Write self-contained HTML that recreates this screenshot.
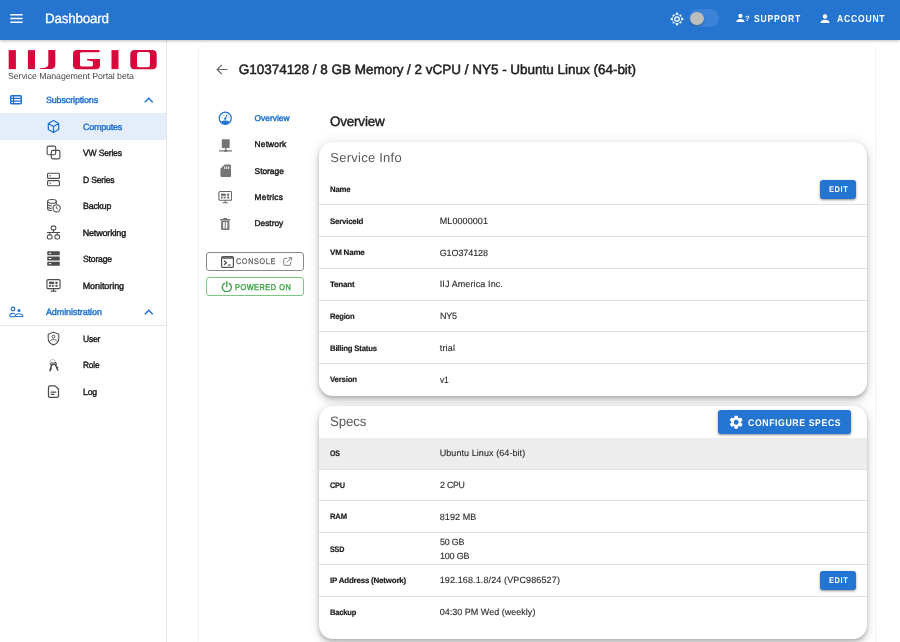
<!DOCTYPE html>
<html>
<head>
<meta charset="utf-8">
<title>Dashboard</title>
<style>
*{box-sizing:border-box;margin:0;padding:0}
html,body{width:900px;height:642px;overflow:hidden;background:#fff;font-family:"Liberation Sans",sans-serif;color:#222}
.abs{position:absolute}
#tx{position:absolute;left:0;top:0;width:900px;height:642px;will-change:transform;text-rendering:geometricPrecision}
.t{position:absolute;white-space:nowrap;line-height:1}
#hdr{position:absolute;left:0;top:0;width:900px;height:39.5px;background:#2575d0;box-shadow:0 1px 3px rgba(0,0,0,.26)}
#side{position:absolute;left:0;top:39.5px;width:167px;height:602.5px;background:#fff;border-right:1px solid #e6e6e6}
#main{position:absolute;left:199px;top:47px;width:676.2px;height:595px;background:#fff;border-radius:3px 3px 0 0;box-shadow:0 1px 2.500px rgba(0,0,0,.12),0 0 1px rgba(0,0,0,.12);overflow:hidden}
#mi{position:absolute;left:-199px;top:-47px;width:900px;height:642px}
.card{position:absolute;background:#fff;border-radius:14px;box-shadow:0 2.1px 3.5px -.7px rgba(0,0,0,.17),0 4.2px 7px 0 rgba(0,0,0,.12),0 .7px 12.6px 0 rgba(0,0,0,.1)}
.sep{position:absolute;left:319.200px;width:548.100px;height:1px;background:#e2e2e2}
.btn{position:absolute;background:#2474d2;border-radius:3px;box-shadow:0 1px 2.500px rgba(0,0,0,.45)}
</style>
</head>
<body>
<div id="side"></div>
<div id="main"><div id="mi"><div class="card" style="left:319.200px;top:142px;width:548.100px;height:253.900px"></div>
<div class="card" style="left:319.200px;top:406.200px;width:548.100px;height:232.400px;overflow:hidden"><div style="position:absolute;left:0;top:31.900px;width:100%;height:31.500px;background:#ededed"></div></div></div></div>
<div id="hdr"></div>
<svg class="abs" style="left:10px;top:13px" width="13" height="11" viewBox="0 0 13 11"><path d="M0.300 1.700h12.300M0.300 5.500h12.300M0.300 9.300h12.300" stroke="#fff" stroke-width="1.400" fill="none"/></svg>
<svg class="abs" style="left:670.100px;top:11.600px" width="14" height="14" viewBox="-12 -12 24 24"><circle cx="0" cy="0" r="3.800" fill="none" stroke="#fff" stroke-width="2.200"/><g fill="#fff"><path d="M0 -11.800L3.400 -7.300H-3.400Z"/><path d="M0 11.800L3.400 7.300H-3.400Z"/><path d="M-11.800 0L-7.300 3.400V-3.400Z"/><path d="M11.800 0L7.300 3.400V-3.400Z"/><g transform="rotate(45)"><path d="M0 -10.800L2.800 -7.200H-2.800Z"/><path d="M0 10.800L2.800 7.200H-2.800Z"/><path d="M-10.800 0L-7.200 2.800V-2.800Z"/><path d="M10.800 0L7.200 2.800V-2.800Z"/></g></g></svg>
<div class="abs" style="left:688.800px;top:9.400px;width:30.600px;height:17.600px;border-radius:9px;background:#3b83d8"></div>
<div class="abs" style="left:690.400px;top:11.500px;width:13.600px;height:13.600px;border-radius:7px;background:#bdbdbd;box-shadow:0 1px 2px rgba(0,0,0,.3)"></div>
<svg class="abs" style="left:735.600px;top:12.400px" width="12" height="11" viewBox="0 0 26 24"><circle cx="9.500" cy="8.500" r="4.500" fill="#fff"/><path d="M.5 22c0-4.600 4.500-6.800 9-6.800s9 2.200 9 6.800z" fill="#fff"/></svg>
<svg class="abs" style="left:819px;top:12px" width="12" height="13" viewBox="0 0 24 24"><circle cx="12" cy="8" r="4.400" fill="#fff"/><path d="M3 21c0-4.500 4.500-6.500 9-6.500s9 2 9 6.500z" fill="#fff"/></svg>
<svg class="abs" style="left:0;top:44px" width="167" height="30" viewBox="0 44 167 30">
 <g fill="#d7063b">
  <rect x="8.700" y="50.100" width="7.200" height="19"/>
  <rect x="27.900" y="50.100" width="7.100" height="19"/>
  <path d="M48.300 50.100H55.300V65C55.300 67.800 53.600 69.100 50.500 69.100H39.700V68.200C43 68.100 48.300 68 48.300 64.500Z"/>
  <path d="M77 50H99.500V52.300H81.800C80.500 52.300 80 52.900 80 54V64.800C80 65.900 80.500 66.400 81.800 66.400H91.200C92.500 66.400 93 65.900 93 64.800V61.600L87 60.200V59H100V65.300C100 68 98.700 69.300 96 69.300H77C74.300 69.300 73 68 73 65.300V54C73 51.300 74.300 50 77 50Z"/>
  <rect x="111.500" y="50.100" width="7" height="19"/>
  <path fill-rule="evenodd" d="M134.800 50H152.200C155.200 50 156.700 51.500 156.700 54.500V64.800C156.700 67.800 155.200 69.300 152.200 69.300H134.800C131.800 69.300 130.300 67.800 130.300 64.800V54.500C130.300 51.500 131.800 50 134.800 50ZM139.500 52C137.800 52 137 52.800 137 54.500V64.800C137 66.500 137.800 67.300 139.500 67.300H147.500C149.200 67.300 150 66.500 150 64.800V54.500C150 52.800 149.200 52 147.500 52Z"/>
 </g>
</svg>
<svg class="abs" style="left:10px;top:95px" width="12" height="9.500" viewBox="0 0 12 9.500"><rect x=".7" y=".7" width="10.600" height="8.100" rx="1" fill="none" stroke="#1f72d2" stroke-width="1.500"/><path d="M.7 3.400h10.600M.7 6.100h10.600M3.600 .7v8.100" stroke="#1f72d2" stroke-width="1.300" fill="none"/></svg>
<svg class="abs" style="left:144px;top:96.500px" width="9.500" height="6" viewBox="0 0 9.500 6"><path d="M.8 5.300l3.950-4 3.950 4" stroke="#1f72d2" stroke-width="1.500" fill="none"/></svg>
<div class="abs" style="left:0;top:113.200px;width:166px;height:26.500px;background:#e4eefa"></div>
<svg class="abs" style="left:45.800px;top:118.9px" width="15" height="15" viewBox="0 0 24 24"><path d="M12 2.500l8.300 4.700v9.600L12 21.500l-8.300-4.700V7.200zM3.700 7.200L12 12l8.300-4.800M12 12v9.500" fill="none" stroke="#1f72d2" stroke-width="2" stroke-linejoin="round"/></svg>
<svg class="abs" style="left:45.800px;top:145.2px" width="15" height="15" viewBox="0 0 24 24"><rect x="1.800" y="1.800" width="13.700" height="13.700" rx="2.500" fill="none" stroke="#4c4c4c" stroke-width="1.800"/><rect x="8.500" y="8.500" width="13.700" height="13.700" rx="2.500" fill="none" stroke="#4c4c4c" stroke-width="1.800"/></svg>
<svg class="abs" style="left:45.800px;top:171.9px" width="15" height="15" viewBox="0 0 24 24"><rect x="2.500" y="2" width="19" height="8.200" rx="1.600" fill="none" stroke="#4c4c4c" stroke-width="1.800"/><rect x="2.500" y="13.800" width="19" height="8.200" rx="1.600" fill="none" stroke="#4c4c4c" stroke-width="1.800"/><path d="M5.500 6.100h2.500M5.500 17.900h2.500" stroke="#4c4c4c" stroke-width="1.600"/></svg>
<svg class="abs" style="left:45.800px;top:198.4px" width="15" height="15" viewBox="0 0 24 24"><ellipse cx="9.500" cy="5.500" rx="7" ry="3" fill="none" stroke="#4c4c4c" stroke-width="1.700"/><path d="M2.500 5.500v11.500c0 1.700 3 3 7 3M16.500 5.500v4M2.500 9.500c0 1.700 3 3 7 3M2.500 13.500c0 1.700 3 3 7 3" fill="none" stroke="#4c4c4c" stroke-width="1.700"/><circle cx="17" cy="16.500" r="5.800" fill="#fff" stroke="#4c4c4c" stroke-width="1.700"/><path d="M17 13.300v3.400l2.200 1.500" fill="none" stroke="#4c4c4c" stroke-width="1.500"/></svg>
<svg class="abs" style="left:45.800px;top:224.8px" width="15" height="15" viewBox="0 0 24 24"><rect x="8.300" y="1.800" width="7.400" height="6" rx="2" fill="none" stroke="#4c4c4c" stroke-width="1.700"/><rect x="2.300" y="15.800" width="7.400" height="6.700" rx="2.500" fill="none" stroke="#4c4c4c" stroke-width="1.700"/><rect x="14.300" y="15.800" width="7.400" height="6.700" rx="2.500" fill="none" stroke="#4c4c4c" stroke-width="1.700"/><path d="M12 7.800v4.200M1.500 12h21M6 12v3.800M18 12v3.800" fill="none" stroke="#4c4c4c" stroke-width="1.700"/></svg>
<svg class="abs" style="left:45.800px;top:251.3px" width="15" height="15" viewBox="0 0 24 24"><g fill="#4c4c4c"><rect x="2" y=".5" width="20" height="6.400" rx=".8"/><rect x="2" y="8.800" width="20" height="6.400" rx=".8"/><rect x="2" y="17.100" width="20" height="6.400" rx=".8"/></g><path d="M4.500 3.700h4M4.500 12h4M4.500 20.300h4" stroke="#fff" stroke-width="1.600"/></svg>
<svg class="abs" style="left:45.800px;top:277.7px" width="15" height="15" viewBox="0 0 24 24"><rect x="1.500" y="2.500" width="21" height="14.500" rx="2" fill="none" stroke="#4c4c4c" stroke-width="1.800"/><path d="M12 17v3M7.500 21h9" stroke="#4c4c4c" stroke-width="1.800"/><g fill="#4c4c4c"><rect x="5" y="6" width="8" height="3.500"/><rect x="15" y="6" width="3.500" height="3.500"/><rect x="5" y="11" width="3" height="3"/><rect x="9.500" y="11" width="3" height="3"/><rect x="15" y="11" width="3.500" height="3"/></g></svg>
<svg class="abs" style="left:45.800px;top:331.3px" width="15" height="15" viewBox="0 0 24 24"><path d="M12 1.800l8.500 3.400v6.300c0 5-3.600 9-8.500 10.700-4.900-1.700-8.500-5.700-8.500-10.700V5.200z" fill="none" stroke="#4c4c4c" stroke-width="1.700" stroke-linejoin="round"/><circle cx="12" cy="9" r="2.300" fill="none" stroke="#4c4c4c" stroke-width="1.500"/><path d="M6 16.500c1.600-2 3.600-2.700 6-2.700s4.400.7 6 2.700" fill="none" stroke="#4c4c4c" stroke-width="1.500"/></svg>
<svg class="abs" style="left:45.800px;top:357.5px" width="15" height="15" viewBox="0 0 24 24"><circle cx="10.500" cy="7" r="4.600" fill="none" stroke="#a8a8a8" stroke-width="1.300"/><g stroke="#4c4c4c" stroke-linecap="round" fill="none"><path d="M9.300 9.800L6.500 20.500" stroke-width="2.500"/><path d="M14.800 9.500L18.800 19" stroke-width="2.500"/><path d="M6.800 17l2.300.6M17.200 15.600l2.200-.8" stroke-width="1.500"/></g><circle cx="9.500" cy="9.300" r="2.700" fill="#4c4c4c"/><circle cx="14.600" cy="9" r="2.700" fill="#4c4c4c"/><circle cx="9.500" cy="9" r=".9" fill="#fff"/><circle cx="14.600" cy="8.700" r=".9" fill="#fff"/></svg>
<svg class="abs" style="left:45.800px;top:384.1px" width="15" height="15" viewBox="0 0 24 24"><path d="M6 3h8.500l5.500 5.500V19c0 1.500-.8 2.300-2.300 2.300H6.300C4.800 21.300 4 20.500 4 19V5.300C4 3.800 4.800 3 6.300 3z" fill="none" stroke="#4c4c4c" stroke-width="2" stroke-linejoin="round"/><path d="M7.500 12.800h9M7.500 16.600h6" stroke="#4c4c4c" stroke-width="2"/></svg>
<svg class="abs" style="left:9px;top:306px" width="15" height="12" viewBox="0 0 30 24"><circle cx="8" cy="6" r="3.800" fill="none" stroke="#1f72d2" stroke-width="2.200"/><circle cx="20" cy="9" r="3" fill="#1f72d2"/><path d="M1.500 21c0-4 3-6.500 6.500-6.500 1.500 0 2.800.3 4 1" fill="none" stroke="#1f72d2" stroke-width="2.200"/><path d="M1.500 21.500h10" stroke="#1f72d2" stroke-width="2.200"/><path d="M12.500 21c0-3.500 3.500-5.500 7.500-5.500s7.500 2 7.500 5.500z" fill="none" stroke="#1f72d2" stroke-width="2.200" stroke-linejoin="round"/></svg>
<svg class="abs" style="left:144px;top:308.500px" width="9.500" height="6" viewBox="0 0 9.500 6"><path d="M.8 5.300l3.950-4 3.950 4" stroke="#1f72d2" stroke-width="1.500" fill="none"/></svg>
<div class="abs" style="left:0;top:324.500px;width:166px;height:1px;background:#e4e4e4"></div>
<svg class="abs" style="left:215.500px;top:64px" width="12" height="11" viewBox="0 0 12 11"><path d="M11.300 5.500H1.200M5.800 .8L1.100 5.500l4.700 4.700" fill="none" stroke="#666" stroke-width="1.200"/></svg>
<svg class="abs" style="left:218px;top:110.650px" width="14.500" height="14.500" viewBox="0 0 24 24"><circle cx="12" cy="12" r="10" fill="none" stroke="#1f72d2" stroke-width="2"/><path d="M5.300 17.800C7.800 16.200 10 15.900 12 15.900S16.200 16.200 18.700 17.800C17 20.600 14.500 21.900 12 21.900S7 20.600 5.300 17.800Z" fill="#1f72d2"/><path d="M12 12.800L14.700 6.400" stroke="#1f72d2" stroke-width="1.700" stroke-linecap="round"/><circle cx="12" cy="12.900" r="1.900" fill="#1f72d2"/><g fill="#1f72d2" opacity=".55"><circle cx="6.600" cy="11" r="1.100"/><circle cx="9.500" cy="7.300" r="1.100"/><circle cx="17.500" cy="11" r="1.100"/></g></svg>
<svg class="abs" style="left:218.500px;top:138.700px" width="13.500" height="13.500" viewBox="0 0 24 24"><rect x="5" y="0.500" width="14" height="15.500" rx="1.500" fill="#757575"/><path d="M12 16v4M0 21h24" stroke="#757575" stroke-width="2"/><rect x="9.500" y="19" width="5" height="4" fill="#757575"/></svg>
<svg class="abs" style="left:219.500px;top:164.300px" width="11.500" height="13.500" viewBox="0 0 20 24"><path d="M8 1h9.500c1.200 0 2 .8 2 2v18c0 1.200-.8 2-2 2h-15c-1.200 0-2-.8-2-2V8.500z" fill="#757575"/><path d="M8.300 4.500v4.500M11.800 4.500v4.500M15.300 4.500v4.500" stroke="#fff" stroke-width="1.800"/></svg>
<svg class="abs" style="left:217.800px;top:190.200px" width="14.500" height="14.500" viewBox="0 0 24 24"><rect x="1.500" y="2.500" width="21" height="14.500" rx="2" fill="none" stroke="#666" stroke-width="1.800"/><path d="M12 17v3M7.500 21h9" stroke="#666" stroke-width="1.800"/><g fill="#666"><rect x="5" y="6" width="8" height="3.500"/><rect x="15" y="6" width="3.500" height="3.500"/><rect x="5" y="11" width="3" height="3"/><rect x="9.500" y="11" width="3" height="3"/><rect x="15" y="11" width="3.500" height="3"/></g></svg>
<svg class="abs" style="left:220px;top:217.500px" width="10.500" height="12.500" viewBox="0 0 20 24"><path d="M0 3h20M6.500 1h7" stroke="#757575" stroke-width="2.500"/><path d="M2 5h16v16.500c0 1-.8 1.700-1.700 1.700H3.700c-.9 0-1.700-.7-1.700-1.700z" fill="#757575"/><path d="M6 7.500h3v12.500H6zM11 7.500h3v12.500h-3z" fill="#fff"/></svg>
<div class="abs" style="left:206.400px;top:252.300px;width:97.400px;height:18.600px;border:1px solid #8a8a8a;border-radius:3px"></div>
<svg class="abs" style="left:220.500px;top:255.500px" width="13" height="12" viewBox="0 0 26 24"><rect x="1.200" y="1.200" width="23.600" height="21.600" rx="2.500" fill="none" stroke="#555" stroke-width="2.400"/><path d="M1.200 4h23.600" stroke="#555" stroke-width="3"/><path d="M6 9.500l5 4-5 4M13.500 18h6" fill="none" stroke="#444" stroke-width="2.300"/></svg>
<svg class="abs" style="left:283px;top:257px" width="9.500" height="9" viewBox="0 0 20 19"><path d="M9 3H3.500C2.400 3 1.500 3.900 1.500 5v10.500c0 1.100.9 2 2 2H14c1.100 0 2-.9 2-2V10" fill="none" stroke="#777" stroke-width="2"/><path d="M8 11.500L18 1.500M12 1.500h6v6" fill="none" stroke="#777" stroke-width="2"/></svg>
<div class="abs" style="left:206.400px;top:277.300px;width:97.400px;height:18.600px;border:1px solid #7cc883;border-radius:3px"></div>
<svg class="abs" style="left:220.600px;top:280.700px" width="11.600" height="11.600" viewBox="0 0 22 22"><path d="M6.500 4.500a8.600 8.600 0 1 0 9 0" fill="none" stroke="#3fa647" stroke-width="2.600" stroke-linecap="round"/><path d="M11 1.200v9.500" stroke="#3fa647" stroke-width="2.600" stroke-linecap="round"/></svg>
<div class="sep" style="top:204.2px"></div>
<div class="sep" style="top:235.9px"></div>
<div class="sep" style="top:267.7px"></div>
<div class="sep" style="top:299.5px"></div>
<div class="sep" style="top:331.3px"></div>
<div class="sep" style="top:362.8px"></div>
<div class="btn" style="left:820.200px;top:180.200px;width:36.200px;height:18.500px"></div>
<div class="sep" style="top:468.8px"></div>
<div class="sep" style="top:500.4px"></div>
<div class="sep" style="top:532.1px"></div>
<div class="sep" style="top:563.8px"></div>
<div class="sep" style="top:595.6px"></div>
<div class="btn" style="left:718px;top:410.300px;width:132.800px;height:24px"></div>
<svg class="abs" style="left:728px;top:413.800px" width="16.400" height="16.400" viewBox="0 0 24 24"><path fill="#fff" d="M19.140 12.940c.04-.3.060-.61.060-.94 0-.32-.02-.64-.07-.94l2.030-1.580a.49.49 0 0 0 .12-.61l-1.920-3.320a.488.488 0 0 0-.59-.22l-2.390.96c-.5-.38-1.030-.7-1.620-.94l-.36-2.540a.484.484 0 0 0-.48-.41h-3.840c-.24 0-.43.170-.47.410l-.36 2.540c-.59.240-1.130.57-1.620.94l-2.390-.96c-.22-.08-.47 0-.59.220L2.740 8.870c-.12.210-.08.470.12.610l2.030 1.580c-.05.300-.09.630-.09.940s.02.640.07.940l-2.030 1.580a.49.49 0 0 0-.12.610l1.920 3.320c.12.220.37.290.59.220l2.390-.96c.5.380 1.030.7 1.620.94l.36 2.540c.05.240.24.410.48.410h3.840c.24 0 .44-.17.470-.41l.36-2.540c.59-.24 1.130-.56 1.620-.94l2.390.96c.22.080.47 0 .59-.22l1.920-3.320c.12-.22.070-.47-.12-.61l-2.010-1.580zM12 15.600c-1.980 0-3.600-1.620-3.600-3.600s1.620-3.600 3.600-3.600 3.600 1.620 3.600 3.600-1.620 3.600-3.600 3.600z"/></svg>
<div class="btn" style="left:820.200px;top:571.200px;width:36.200px;height:18.500px"></div>
<div id="tx">
<div class="t" style="left:45.0px;top:12.00px;transform:scaleX(0.9931);transform-origin:0 0;font-size:13.5px;color:#fff;-webkit-text-stroke:0.3px;letter-spacing:-0.200px;">Dashboard</div>
<div class="t" style="left:745.0px;top:15.00px;font-size:7.6px;color:#fff;font-weight:bold;">?</div>
<div class="t" style="left:754.0px;top:15.00px;transform:scaleX(0.8400);transform-origin:0 0;font-size:10.2px;color:#fff;font-weight:bold;letter-spacing:0.958px;">SUPPORT</div>
<div class="t" style="left:837.2px;top:15.00px;transform:scaleX(0.8400);transform-origin:0 0;font-size:10.2px;color:#fff;font-weight:bold;letter-spacing:0.955px;">ACCOUNT</div>
<div class="t" style="left:8.0px;top:72.00px;font-size:8.8px;color:#4a4a4a;letter-spacing:-0.073px;">Service Management Portal beta</div>
<div class="t" style="left:45.9px;top:96.00px;font-size:9.0px;color:#1f72d2;-webkit-text-stroke:0.42px;letter-spacing:-0.144px;">Subscriptions</div>
<div class="t" style="left:82.7px;top:123.00px;transform:scaleX(0.9916);transform-origin:0 0;font-size:9.0px;color:#1f72d2;-webkit-text-stroke:0.42px;letter-spacing:-0.200px;">Computes</div>
<div class="t" style="left:82.7px;top:149.00px;transform:scaleX(0.9532);transform-origin:0 0;font-size:9.0px;color:#222;-webkit-text-stroke:0.42px;letter-spacing:-0.200px;">VW Series</div>
<div class="t" style="left:82.7px;top:176.00px;transform:scaleX(0.9542);transform-origin:0 0;font-size:9.0px;color:#222;-webkit-text-stroke:0.42px;letter-spacing:-0.200px;">D Series</div>
<div class="t" style="left:82.7px;top:202.00px;transform:scaleX(0.9783);transform-origin:0 0;font-size:9.0px;color:#222;-webkit-text-stroke:0.42px;letter-spacing:-0.200px;">Backup</div>
<div class="t" style="left:82.7px;top:229.00px;font-size:9.0px;color:#222;-webkit-text-stroke:0.42px;letter-spacing:-0.170px;">Networking</div>
<div class="t" style="left:82.7px;top:255.00px;transform:scaleX(0.9594);transform-origin:0 0;font-size:9.0px;color:#222;-webkit-text-stroke:0.42px;letter-spacing:-0.200px;">Storage</div>
<div class="t" style="left:82.7px;top:282.00px;font-size:9.0px;color:#222;-webkit-text-stroke:0.42px;letter-spacing:-0.070px;">Monitoring</div>
<div class="t" style="left:82.7px;top:335.00px;transform:scaleX(0.9448);transform-origin:0 0;font-size:9.0px;color:#222;-webkit-text-stroke:0.42px;letter-spacing:-0.200px;">User</div>
<div class="t" style="left:82.7px;top:361.00px;transform:scaleX(0.9210);transform-origin:0 0;font-size:9.0px;color:#222;-webkit-text-stroke:0.42px;letter-spacing:-0.200px;">Role</div>
<div class="t" style="left:82.7px;top:388.00px;transform:scaleX(0.9705);transform-origin:0 0;font-size:9.0px;color:#222;-webkit-text-stroke:0.42px;letter-spacing:-0.200px;">Log</div>
<div class="t" style="left:45.9px;top:308.00px;font-size:9.0px;color:#1f72d2;-webkit-text-stroke:0.42px;letter-spacing:-0.072px;">Administration</div>
<div class="t" style="left:238.7px;top:63.00px;font-size:13.5px;color:#222;-webkit-text-stroke:0.5px;letter-spacing:-0.017px;">G10374128 / 8 GB Memory / 2 vCPU / NY5 - Ubuntu Linux (64-bit)</div>
<div class="t" style="left:254.6px;top:114.00px;font-size:8.4px;color:#1f72d2;-webkit-text-stroke:0.42px;letter-spacing:-0.001px;">Overview</div>
<div class="t" style="left:254.6px;top:140.00px;font-size:8.4px;color:#222;-webkit-text-stroke:0.42px;letter-spacing:0.164px;">Network</div>
<div class="t" style="left:254.6px;top:167.00px;font-size:8.4px;color:#222;-webkit-text-stroke:0.42px;letter-spacing:-0.024px;">Storage</div>
<div class="t" style="left:254.6px;top:193.00px;font-size:8.4px;color:#222;-webkit-text-stroke:0.42px;letter-spacing:0.217px;">Metrics</div>
<div class="t" style="left:254.6px;top:219.00px;font-size:8.4px;color:#222;-webkit-text-stroke:0.42px;letter-spacing:-0.043px;">Destroy</div>
<div class="t" style="left:236.2px;top:258.00px;transform:scaleX(0.8800);transform-origin:0 0;font-size:8.2px;color:#666;-webkit-text-stroke:0.3px;letter-spacing:0.750px;">CONSOLE</div>
<div class="t" style="left:235.3px;top:283.00px;transform:scaleX(0.8800);transform-origin:0 0;font-size:8.3px;color:#3fa647;-webkit-text-stroke:0.4px;letter-spacing:0.630px;">POWERED ON</div>
<div class="t" style="left:330.3px;top:115.00px;transform:scaleX(0.9830);transform-origin:0 0;font-size:13.7px;color:#1a1a1a;-webkit-text-stroke:0.4px;letter-spacing:-0.200px;">Overview</div>
<div class="t" style="left:330.3px;top:151.00px;font-size:13px;color:#5a5a5a;letter-spacing:0.249px;">Service Info</div>
<div class="t" style="left:330.3px;top:186.00px;transform:scaleX(0.9671);transform-origin:0 0;font-size:8.0px;color:#1c1c1c;font-weight:bold;-webkit-text-stroke:0.2px;letter-spacing:-0.200px;">Name</div>
<div class="t" style="left:330.3px;top:218.00px;transform:scaleX(0.9800);transform-origin:0 0;font-size:8.0px;color:#1c1c1c;font-weight:bold;-webkit-text-stroke:0.2px;letter-spacing:-0.200px;">ServiceId</div>
<div class="t" style="left:439.7px;top:217.00px;font-size:9.0px;color:#303030;-webkit-text-stroke:0.15px;letter-spacing:0.094px;">ML0000001</div>
<div class="t" style="left:330.3px;top:249.00px;transform:scaleX(0.9996);transform-origin:0 0;font-size:8.0px;color:#1c1c1c;font-weight:bold;-webkit-text-stroke:0.2px;letter-spacing:-0.200px;">VM Name</div>
<div class="t" style="left:439.7px;top:249.00px;font-size:9.0px;color:#303030;-webkit-text-stroke:0.15px;letter-spacing:-0.093px;">G1O374128</div>
<div class="t" style="left:330.3px;top:281.00px;transform:scaleX(0.9984);transform-origin:0 0;font-size:8.0px;color:#1c1c1c;font-weight:bold;-webkit-text-stroke:0.2px;letter-spacing:-0.200px;">Tenant</div>
<div class="t" style="left:439.7px;top:280.00px;font-size:9.0px;color:#303030;-webkit-text-stroke:0.15px;letter-spacing:0.111px;">IIJ America Inc.</div>
<div class="t" style="left:330.3px;top:313.00px;transform:scaleX(0.9422);transform-origin:0 0;font-size:8.0px;color:#1c1c1c;font-weight:bold;-webkit-text-stroke:0.2px;letter-spacing:-0.200px;">Region</div>
<div class="t" style="left:439.7px;top:312.00px;transform:scaleX(0.9991);transform-origin:0 0;font-size:9.0px;color:#303030;-webkit-text-stroke:0.15px;letter-spacing:-0.200px;">NY5</div>
<div class="t" style="left:330.3px;top:345.00px;transform:scaleX(0.9686);transform-origin:0 0;font-size:8.0px;color:#1c1c1c;font-weight:bold;-webkit-text-stroke:0.2px;letter-spacing:-0.200px;">Billing Status</div>
<div class="t" style="left:439.7px;top:344.00px;font-size:9.0px;color:#303030;-webkit-text-stroke:0.15px;letter-spacing:0.196px;">trial</div>
<div class="t" style="left:330.3px;top:376.00px;transform:scaleX(0.9745);transform-origin:0 0;font-size:8.0px;color:#1c1c1c;font-weight:bold;-webkit-text-stroke:0.2px;letter-spacing:-0.200px;">Version</div>
<div class="t" style="left:439.7px;top:376.00px;transform:scaleX(0.9339);transform-origin:0 0;font-size:9.0px;color:#303030;-webkit-text-stroke:0.15px;letter-spacing:-0.200px;">v1</div>
<div class="t" style="left:828.8px;top:185.00px;transform:scaleX(0.9000);transform-origin:0 0;font-size:8.3px;color:#fff;font-weight:bold;letter-spacing:0.661px;">EDIT</div>
<div class="t" style="left:330.3px;top:415.00px;transform:scaleX(0.9746);transform-origin:0 0;font-size:13.7px;color:#5a5a5a;letter-spacing:-0.200px;">Specs</div>
<div class="t" style="left:330.3px;top:450.00px;transform:scaleX(0.8713);transform-origin:0 0;font-size:8.0px;color:#1c1c1c;font-weight:bold;-webkit-text-stroke:0.2px;letter-spacing:-0.200px;">OS</div>
<div class="t" style="left:439.7px;top:449.00px;font-size:9.0px;color:#303030;-webkit-text-stroke:0.15px;letter-spacing:0.073px;">Ubuntu Linux (64-bit)</div>
<div class="t" style="left:330.3px;top:482.00px;transform:scaleX(0.9157);transform-origin:0 0;font-size:8.0px;color:#1c1c1c;font-weight:bold;-webkit-text-stroke:0.2px;letter-spacing:-0.200px;">CPU</div>
<div class="t" style="left:439.7px;top:481.00px;transform:scaleX(0.9683);transform-origin:0 0;font-size:9.0px;color:#303030;-webkit-text-stroke:0.15px;letter-spacing:-0.200px;">2 CPU</div>
<div class="t" style="left:330.3px;top:513.00px;transform:scaleX(0.9541);transform-origin:0 0;font-size:8.0px;color:#1c1c1c;font-weight:bold;-webkit-text-stroke:0.2px;letter-spacing:-0.200px;">RAM</div>
<div class="t" style="left:439.7px;top:513.00px;font-size:9.0px;color:#303030;-webkit-text-stroke:0.15px;letter-spacing:0.095px;">8192 MB</div>
<div class="t" style="left:330.3px;top:546.00px;transform:scaleX(0.8970);transform-origin:0 0;font-size:8.0px;color:#1c1c1c;font-weight:bold;-webkit-text-stroke:0.2px;letter-spacing:-0.200px;">SSD</div>
<div class="t" style="left:330.3px;top:577.00px;transform:scaleX(0.9939);transform-origin:0 0;font-size:8.0px;color:#1c1c1c;font-weight:bold;-webkit-text-stroke:0.2px;letter-spacing:-0.200px;">IP Address (Network)</div>
<div class="t" style="left:439.7px;top:576.00px;font-size:9.0px;color:#303030;-webkit-text-stroke:0.15px;letter-spacing:0.124px;">192.168.1.8/24 (VPC986527)</div>
<div class="t" style="left:330.3px;top:609.00px;transform:scaleX(0.9460);transform-origin:0 0;font-size:8.0px;color:#1c1c1c;font-weight:bold;-webkit-text-stroke:0.2px;letter-spacing:-0.200px;">Backup</div>
<div class="t" style="left:439.7px;top:608.00px;font-size:9.0px;color:#303030;-webkit-text-stroke:0.15px;letter-spacing:0.016px;">04:30 PM Wed (weekly)</div>
<div class="t" style="left:439.7px;top:538.00px;transform:scaleX(0.9913);transform-origin:0 0;font-size:9.0px;color:#303030;-webkit-text-stroke:0.15px;letter-spacing:-0.200px;">50 GB</div>
<div class="t" style="left:439.7px;top:552.00px;transform:scaleX(0.9956);transform-origin:0 0;font-size:9.0px;color:#303030;-webkit-text-stroke:0.15px;letter-spacing:-0.200px;">100 GB</div>
<div class="t" style="left:747.7px;top:419.00px;transform:scaleX(0.9000);transform-origin:0 0;font-size:9.7px;color:#fff;font-weight:bold;letter-spacing:0.658px;">CONFIGURE SPECS</div>
<div class="t" style="left:828.8px;top:576.00px;transform:scaleX(0.9000);transform-origin:0 0;font-size:8.3px;color:#fff;font-weight:bold;letter-spacing:0.661px;">EDIT</div>
</div>
</body>
</html>
